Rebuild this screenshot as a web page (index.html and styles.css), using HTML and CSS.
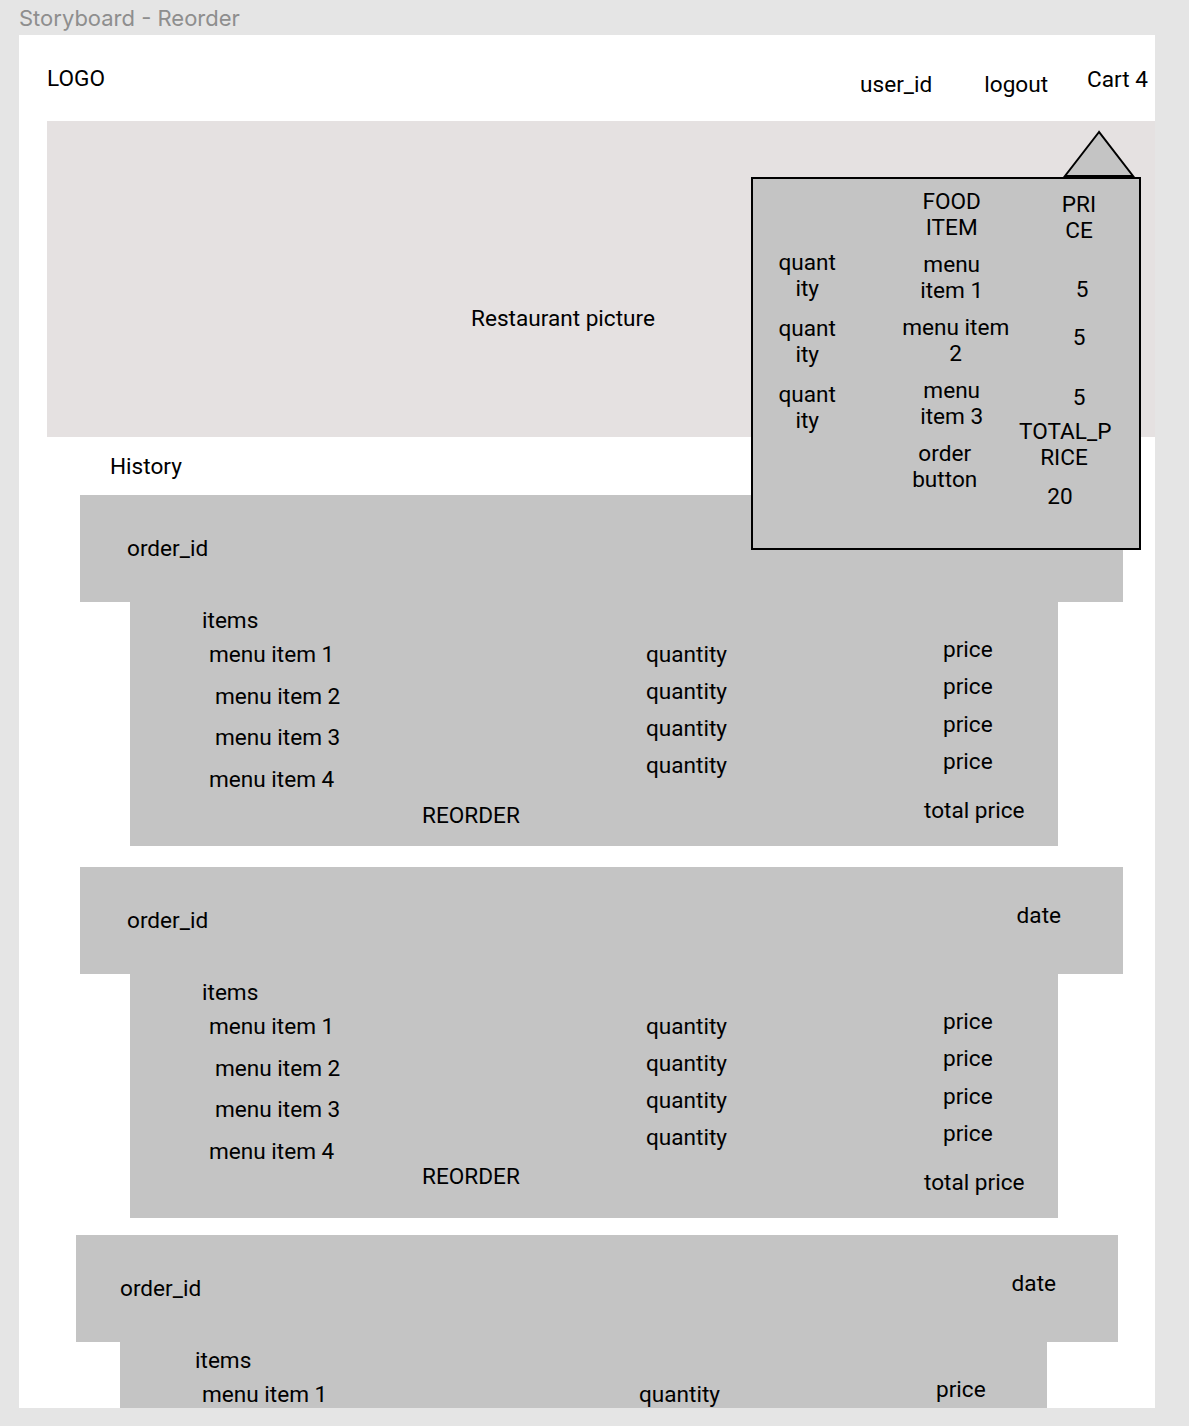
FILE: index.html
```html
<!doctype html>
<html lang="en">
  <head>
    <meta charset="UTF-8" />
    <meta name="viewport" content="width=device-width, initial-scale=1.0" />
    <title>Storyboard - Reorder</title>
    <link rel="stylesheet" href="styles.css">
  </head>
  <body>
    <div class="board-title">Storyboard - Reorder</div>

    <div class="frame">
      <header class="topbar">
        <div class="logo">LOGO</div>
        <nav class="nav">
          <span class="nav-link">user_id</span>
          <span class="nav-link">logout</span>
          <span class="nav-link cart-link">Cart 4</span>
        </nav>
      </header>

      <div class="hero">Restaurant picture</div>

      <h2 class="section-title">History</h2>

      <div class="history">
        <!-- Order 1 -->
        <div class="order">
          <div class="order-head">
            <span>order_id</span>
            <span class="order-date">date</span>
          </div>
          <div class="order-body">
            <div class="items-label">items</div>
            <div class="order-lines">
              <div class="col-names">
                <span>menu item 1</span>
                <span>menu item 2</span>
                <span>menu item 3</span>
                <span>menu item 4</span>
              </div>
              <div class="col-qty">
                <span>quantity</span>
                <span>quantity</span>
                <span>quantity</span>
                <span>quantity</span>
              </div>
              <div class="col-price">
                <span>price</span>
                <span>price</span>
                <span>price</span>
                <span>price</span>
              </div>
            </div>
            <div class="order-foot">
              <span class="reorder">REORDER</span>
              <span class="total">total price</span>
            </div>
          </div>
        </div>

        <!-- Order 2 -->
        <div class="order">
          <div class="order-head">
            <span>order_id</span>
            <span class="order-date">date</span>
          </div>
          <div class="order-body">
            <div class="items-label">items</div>
            <div class="order-lines">
              <div class="col-names">
                <span>menu item 1</span>
                <span>menu item 2</span>
                <span>menu item 3</span>
                <span>menu item 4</span>
              </div>
              <div class="col-qty">
                <span>quantity</span>
                <span>quantity</span>
                <span>quantity</span>
                <span>quantity</span>
              </div>
              <div class="col-price">
                <span>price</span>
                <span>price</span>
                <span>price</span>
                <span>price</span>
              </div>
            </div>
            <div class="order-foot tight">
              <span class="reorder">REORDER</span>
              <span class="total">total price</span>
            </div>
          </div>
        </div>

        <!-- Order 3 (runs past the bottom of the frame) -->
        <div class="order order-last">
          <div class="order-head">
            <span>order_id</span>
            <span class="order-date">date</span>
          </div>
          <div class="order-body">
            <div class="items-label">items</div>
            <div class="order-lines">
              <div class="col-names">
                <span>menu item 1</span>
              </div>
              <div class="col-qty">
                <span>quantity</span>
              </div>
              <div class="col-price">
                <span>price</span>
              </div>
            </div>
          </div>
        </div>
      </div>

      <!-- Cart dropdown -->
      <div class="cart-popup">
        <svg class="cart-caret" width="72" height="48" viewBox="0 0 72 48">
          <polygon points="36,2 2,46 70,46" fill="#c4c4c4" stroke="#000" stroke-width="2" />
        </svg>
        <div class="cart-cols">
          <div class="cart-qty">
            <span>quant<br>ity</span>
            <span>quant<br>ity</span>
            <span>quant<br>ity</span>
          </div>
          <div class="cart-food">
            <span>FOOD<br>ITEM</span>
            <span>menu<br>item 1</span>
            <span class="shift-right">menu item<br>2</span>
            <span>menu<br>item 3</span>
            <span class="shift-left">order<br>button</span>
          </div>
          <div class="cart-price">
            <span>PRI<br>CE</span>
            <span>5</span>
            <span>5</span>
            <span>5</span>
            <span class="cart-total">TOTAL_P<br>RICE</span>
            <span class="cart-sum">20</span>
          </div>
        </div>
      </div>
    </div>
  </body>
</html>
```

FILE: styles.css
```css
body {
  margin: 0;
  height: 1426px;
  background-color: #e5e5e5;
  font-family: Roboto, "Liberation Sans", sans-serif;
  font-size: 22.6px;
  line-height: 26px;
  color: #000;
  overflow: hidden;
}
.board-title {
  height: 35px;
  box-sizing: border-box;
  padding: 5px 0 0 19px;
  font-family: Inter, "Noto Sans", sans-serif;
  font-size: 22px;
  line-height: 26px;
  color: #8e8e8e;
}
.frame {
  position: relative;
  margin-left: 19px;
  width: 1136px;
  height: 1373px;
  background-color: #fff;
  overflow: hidden;
}
/* Top bar */
.topbar {
  display: flex;
  align-items: flex-start;
  height: 86px;
}
.logo {
  margin: 31px 0 0 28px;
}
.nav {
  display: flex;
  align-items: flex-start;
  margin-left: auto;
  padding-right: 7px;
}
.nav-link {
  margin-top: 37px;
}
.nav-link + .nav-link {
  margin-left: 52px;
}
.nav-link.cart-link {
  margin-top: 32px;
  margin-left: 39px;
}
/* Hero */
.hero {
  margin-left: 28px;
  height: 316px;
  box-sizing: border-box;
  padding: 185px 0 0 424px;
  background-color: #e5e1e1;
}
.section-title {
  margin: 0;
  padding: 17px 0 15px 91px;
  font-size: 22.6px;
  font-weight: normal;
  line-height: 26px;
}
/* Order cards */
.order {
  margin-left: 61px;
}
.order + .order {
  margin-top: 21px;
}
.order-head {
  display: flex;
  justify-content: space-between;
  align-items: flex-start;
  width: 1043px;
  height: 107px;
  box-sizing: border-box;
  padding: 41px 62px 0 47px;
  background-color: #c4c4c4;
}
.order-date {
  margin-top: -5px;
}
.order:first-child .order-date {
  margin-top: -11px;
}
.order-body {
  margin-left: 50px;
  width: 928px;
  height: 244px;
  box-sizing: border-box;
  padding: 6px 0 0 72px;
  background-color: #c4c4c4;
}
.order-lines {
  display: flex;
  height: 159px;
}
.col-names,
.col-qty,
.col-price {
  display: flex;
  flex-direction: column;
}
.col-names {
  width: 444px;
  padding-top: 8px;
  gap: 15.7px;
}
.col-names span:nth-child(1),
.col-names span:nth-child(4) {
  margin-left: 7px;
}
.col-names span:nth-child(2),
.col-names span:nth-child(3) {
  margin-left: 13px;
}
.col-qty {
  width: 297px;
  padding-top: 8px;
  gap: 11px;
}
.col-price {
  padding-top: 3px;
  gap: 11.3px;
}
.order-foot {
  display: flex;
  align-items: flex-start;
}
.reorder {
  width: 502px;
  margin: 10px 0 0 220px;
}
.total {
  margin-top: 5px;
}
.order-foot.tight .reorder {
  margin-top: -1px;
}
.order.order-last {
  margin-top: 17px;
  margin-left: 57px;
}
.order-last .order-head {
  width: 1042px;
  padding-left: 44px;
}
.order-last .order-body {
  margin-left: 44px;
  width: 927px;
  padding-left: 75px;
}
/* Cart dropdown */
.cart-popup {
  position: absolute;
  left: 732px;
  top: 142px;
  width: 390px;
  height: 373px;
  box-sizing: border-box;
  border: 2px solid #000;
  background-color: #c4c4c4;
}
.cart-caret {
  position: absolute;
  left: 310px;
  top: -49px;
  display: block;
}
.cart-cols {
  display: flex;
  padding-left: 10px;
  text-align: center;
}
.cart-qty,
.cart-food,
.cart-price {
  display: flex;
  flex-direction: column;
}
.cart-qty {
  width: 90px;
  padding-top: 71px;
  gap: 14px;
}
.cart-food {
  width: 137px;
  margin-left: 33px;
  padding-top: 10px;
  gap: 11px;
}
.cart-food .shift-right {
  padding-left: 8px;
}
.cart-food .shift-left {
  padding-right: 14px;
}
.cart-price {
  width: 120px;
  padding-top: 13px;
}
.cart-price span:nth-child(2) {
  margin-top: 33px;
  padding-left: 6px;
}
.cart-price span:nth-child(3) {
  margin-top: 22px;
}
.cart-price span:nth-child(4) {
  margin-top: 34px;
}
.cart-price .cart-total {
  margin-top: 8px;
  padding-right: 30px;
}
.cart-price .cart-sum {
  margin-top: 13px;
  padding-right: 38px;
}
```
